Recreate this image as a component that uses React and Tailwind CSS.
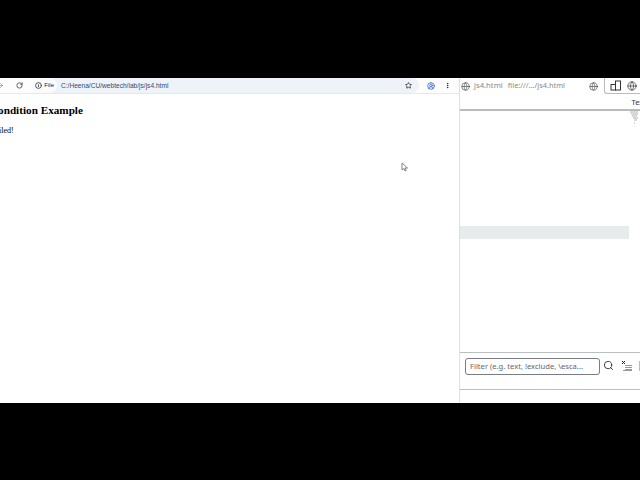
import { Globe, RotateCw, ArrowRight, Info, Star, EllipsisVertical, Search, CircleUserRound } from 'lucide-react';

const sans = { fontFamily: '"Noto Sans", "Liberation Sans", sans-serif' };

function BrowserBar() {
  return (
    <div className="h-[16px] flex items-center bg-[#fdfdfe] border-b border-[#e6e8ec] shrink-0 overflow-hidden">
      <ArrowRight className="w-[7px] h-[7px] shrink-0 -ml-[3px] mr-[12px] text-[#777]" strokeWidth={2} />
      <RotateCw className="w-[7px] h-[7px] shrink-0 text-[#333]" strokeWidth={2.5} />
      <div className="ml-[9px] w-[387px] shrink-0 h-[15px] flex items-center rounded-full bg-[#eef2f9] font-['Liberation_Sans',sans-serif]">
        <div className="h-[15px] w-[25px] shrink-0 flex items-center justify-between rounded-full bg-[#fafbfd] pl-[3px] pr-[3px]">
          <Info className="w-[7px] h-[7px] shrink-0 text-[#222]" strokeWidth={2.5} />
          <span className="text-[6px] leading-[7px] text-[#222]">File</span>
        </div>
        <span className="ml-[4px] text-[6.6px] leading-[7px] text-[#39496b] whitespace-nowrap">C:/Heena/CU/webtech/lab/js/js4.html</span>
        <Star className="ml-auto mr-[7px] w-[7px] h-[7px] shrink-0 text-[#222]" strokeWidth={2.5} />
      </div>
      <CircleUserRound className="ml-[8px] w-[8px] h-[8px] shrink-0 text-[#3f6fd0]" strokeWidth={2.5} />
      <EllipsisVertical className="ml-[9px] w-[7px] h-[7px] shrink-0 text-[#222]" strokeWidth={3} />
    </div>
  );
}

function Page() {
  return (
    <div className="flex-1 bg-white font-['Liberation_Serif',serif] text-black overflow-hidden">
      <h1 className="-ml-[10px] mt-[9px] text-[11.2px] leading-[14px] font-bold whitespace-nowrap">Condition Example</h1>
      <p className="-ml-[9px] mt-[9px] text-[8px] leading-[10px] whitespace-nowrap">Failed!</p>
    </div>
  );
}

function DevTools() {
  return (
    <div className="w-[181px] shrink-0 flex flex-col border-l border-[#dfe1e3] bg-white overflow-hidden" style={sans}>
      <div className="h-[33px] shrink-0 border-b-2 border-[#b4bcc0] flex flex-col">
        <div className="h-[16px] shrink-0 flex items-center pl-[1px]">
          <Globe className="w-[9px] h-[9px] shrink-0 text-[#333]" strokeWidth={1.5} />
          <span className="ml-[4px] text-[7.7px] leading-none text-[#888] whitespace-nowrap">js4.html</span>
          <span className="ml-[5px] text-[7.4px] leading-none text-[#888] whitespace-nowrap">file:///.../js4.html</span>
          <Globe className="ml-[24px] w-[9px] h-[9px] shrink-0 text-[#333]" strokeWidth={1.5} />
          <div className="ml-[6px] h-[16px] flex-1 flex items-center gap-[6px] pl-[5px] rounded-bl-[3px] border-l border-b border-[#b8bcc0]">
            <svg className="w-[11px] h-[11px] shrink-0 text-[#333]" viewBox="0 0 11 11" fill="none" stroke="currentColor" strokeWidth="1">
              <rect x="5.5" y="1" width="5" height="9" />
              <rect x="1" y="4.5" width="4.500" height="5.500" />
            </svg>
            <Globe className="w-[10px] h-[10px] shrink-0 text-[#222]" strokeWidth={1.5} />
          </div>
        </div>
        <div className="flex-1 flex justify-end items-center pt-[3px] overflow-hidden">
          <span className="text-[7.5px] leading-none text-[#333] whitespace-nowrap -mr-[6px]">Text</span>
        </div>
      </div>
      <div className="flex-1 flex flex-col pr-[11px]">
        <div className="flex justify-end -mr-[10px] h-[13px]">
          <svg className="w-[9px] h-[13px] text-[#aab2b2]" viewBox="0 0 9 13" fill="none" stroke="currentColor" strokeWidth="1">
            <path d="M0 1h8M1 3h7M2 5h5M3 7h5M4 9h3M4 12h1" />
          </svg>
        </div>
        <div className="mt-[102px] h-[13px] bg-[#e8ebeb]" />
      </div>
      <div className="h-[38px] shrink-0 mb-[13px] border-y border-[#b9c0c2] flex items-start pt-[5px] pl-[5px]">
        <div className="w-[135px] h-[17px] shrink-0 flex items-center px-[4px] rounded-[3px] border border-[#777d80]">
          <span className="text-[7.6px] leading-none text-[#666] whitespace-nowrap">Filter (e.g. text, !exclude, \esca...</span>
        </div>
        <Search className="ml-[3px] mt-[2px] w-[11px] h-[11px] shrink-0 text-[#333]" strokeWidth={2} />
        <svg className="ml-[8px] mt-[3px] w-[10px] h-[10px] shrink-0 text-[#999]" viewBox="0 0 10 10" fill="none" stroke="currentColor" strokeWidth="1">
          <path d="M3 4.500h7M3 6.500h7M3 8.500h7M1 9.500h9" />
          <path d="M0 0l3 3M3 0l-3 3" stroke="#222" />
        </svg>
        <div className="ml-[7px] mt-[3px] w-px h-[10px] shrink-0 bg-[#bbb]" />
      </div>
    </div>
  );
}

export default function App() {
  return (
    <div className="w-[640px] h-[480px] bg-black flex flex-col overflow-hidden">
      <div className="h-[78px] shrink-0" />
      <div className="h-[325px] shrink-0 flex">
        <div className="w-[459px] shrink-0 flex flex-col overflow-hidden relative">
          <BrowserBar />
          <Page />
          <svg className="absolute left-[401px] top-[84px] w-[7px] h-[10px]" viewBox="0 0 7 10" fill="#fff" stroke="#666" strokeWidth="0.8">
            <path d="M1 1v7l1.800-1.500L4 9l1.200-.5L4 6h2.500z" />
          </svg>
        </div>
        <DevTools />
      </div>
      <div className="flex-1" />
    </div>
  );
}
